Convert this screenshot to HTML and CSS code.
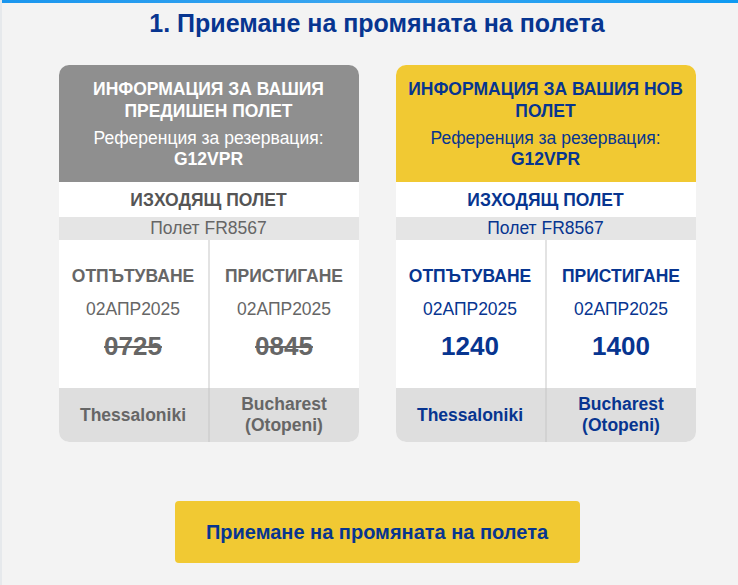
FILE: index.html
```html
<!DOCTYPE html>
<html lang="bg">
<head>
<meta charset="utf-8">
<link rel="stylesheet" href="styles.css">
</head>
<body>
<div class="topbar"></div>
<main class="page">
  <h1 class="title">1. Приемане на промяната на полета</h1>
  <div class="cards">
    <section class="card card-old">
      <header class="card-head">
        <div class="head-title">ИНФОРМАЦИЯ ЗА ВАШИЯ ПРЕДИШЕН ПОЛЕТ</div>
        <div class="head-ref">Референция за резервация:</div>
        <div class="head-code">G12VPR</div>
      </header>
      <div class="direction">ИЗХОДЯЩ ПОЛЕТ</div>
      <div class="flightno">Полет FR8567</div>
      <div class="times">
        <div class="col">
          <div class="label">ОТПЪТУВАНЕ</div>
          <div class="date">02АПР2025</div>
          <div class="time">0725</div>
        </div>
        <div class="col">
          <div class="label">ПРИСТИГАНЕ</div>
          <div class="date">02АПР2025</div>
          <div class="time">0845</div>
        </div>
      </div>
      <div class="places">
        <div class="place">Thessaloniki</div>
        <div class="place">Bucharest<br>(Otopeni)</div>
      </div>
    </section>
    <section class="card card-new">
      <header class="card-head">
        <div class="head-title">ИНФОРМАЦИЯ ЗА ВАШИЯ НОВ ПОЛЕТ</div>
        <div class="head-ref">Референция за резервация:</div>
        <div class="head-code">G12VPR</div>
      </header>
      <div class="direction">ИЗХОДЯЩ ПОЛЕТ</div>
      <div class="flightno">Полет FR8567</div>
      <div class="times">
        <div class="col">
          <div class="label">ОТПЪТУВАНЕ</div>
          <div class="date">02АПР2025</div>
          <div class="time">1240</div>
        </div>
        <div class="col">
          <div class="label">ПРИСТИГАНЕ</div>
          <div class="date">02АПР2025</div>
          <div class="time">1400</div>
        </div>
      </div>
      <div class="places">
        <div class="place">Thessaloniki</div>
        <div class="place">Bucharest<br>(Otopeni)</div>
      </div>
    </section>
  </div>
  <div class="actions">
    <button class="accept">Приемане на промяната на полета</button>
  </div>
</main>
</body>
</html>
```
FILE: styles.css
```css
html, body {
  margin: 0;
  padding: 0;
}
body {
  background: #f3f3f3;
  font-family: "Liberation Sans", Arial, sans-serif;
  border-left: 2px solid #e6e9ec;
  min-height: 585px;
  box-sizing: border-box;
}
.topbar {
  height: 3px;
  background: linear-gradient(90deg, #1a96ee, #3aa6f0 50%, #0e9af2);
}
.page {
  display: flex;
  flex-direction: column;
  align-items: center;
  padding-left: 14px;
}
.title {
  margin: 5px 0 0;
  font-size: 25px;
  font-weight: bold;
  color: #073590;
  line-height: 30px;
}
.cards {
  display: flex;
  gap: 37px;
  margin-top: 27px;
}
.card {
  width: 300px;
  border-radius: 10px;
  overflow: hidden;
  background: #fff;
  font-size: 17.5px;
  text-align: center;
}
.card-head {
  height: 117px;
  box-sizing: border-box;
  padding: 13px 8px 0;
}
.head-title {
  font-weight: bold;
  line-height: 22px;
}
.head-ref {
  margin-top: 6px;
  line-height: 21px;
}
.head-code {
  font-weight: bold;
  line-height: 21px;
}
.direction {
  height: 35px;
  line-height: 36px;
  font-weight: bold;
}
.flightno {
  height: 23px;
  line-height: 23px;
  background: #e5e5e5;
}
.times {
  display: flex;
  height: 148px;
}
.col {
  flex: 1;
  display: flex;
  flex-direction: column;
  align-items: center;
  padding-top: 25px;
}
.col + .col {
  border-left: 2px solid #e3e3e3;
}
.label {
  font-weight: bold;
  line-height: 22px;
}
.date {
  margin-top: 11px;
  line-height: 22px;
}
.time {
  margin-top: 11px;
  font-size: 26px;
  font-weight: bold;
  line-height: 30px;
}
.places {
  display: flex;
  height: 54px;
  background: #dedede;
}
.place {
  flex: 1;
  display: flex;
  align-items: center;
  justify-content: center;
  font-weight: bold;
  line-height: 21px;
}
.place + .place {
  border-left: 2px solid #d2d2d2;
}
.card-old .card-head {
  background: #8f8f8f;
  color: #fff;
}
.card-old .flightno,
.card-old .label,
.card-old .date,
.card-old .time,
.card-old .place {
  color: #666;
}
.card-old .direction { color: #555; }
.card-old .time {
  text-decoration: line-through;
  text-decoration-thickness: 2px;
}
.card-new .card-head {
  background: #f1c933;
  color: #073590;
}
.card-new .direction,
.card-new .flightno,
.card-new .label,
.card-new .date,
.card-new .time,
.card-new .place {
  color: #073590;
}
.actions {
  margin-top: 59px;
}
.accept {
  width: 405px;
  height: 62px;
  border: none;
  border-radius: 4px;
  background: #f1c933;
  color: #073590;
  font-family: "Liberation Sans", Arial, sans-serif;
  font-size: 20px;
  font-weight: bold;
  cursor: pointer;
}
```
